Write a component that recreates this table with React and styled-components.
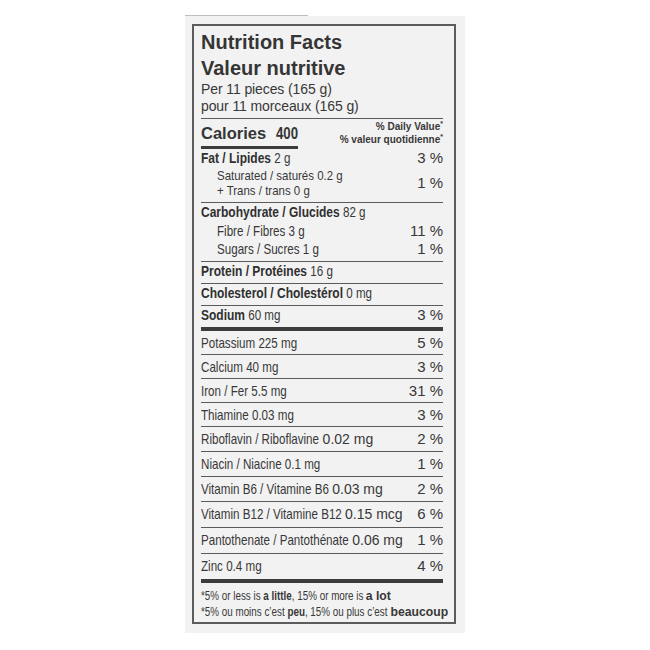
import React from "react";
import styled, { createGlobalStyle } from "styled-components";

const GlobalStyle = createGlobalStyle`
  body {
    margin: 0;
    background: #ffffff;
  }
`;

const SANS = `"Liberation Sans", Arial, sans-serif`;

// the label is printed in a condensed Helvetica; no narrow face is installed,
// so the nutrient text is squeezed horizontally instead
const SQUEEZE = 0.8;

const micronutrients = [
  { name: "Potassium", amount: "225 mg", dv: "5 %", h: 23 },
  { name: "Calcium", amount: "40 mg", dv: "3 %", h: 23 },
  { name: "Iron / Fer", amount: "5.5 mg", dv: "31 %", h: 23 },
  { name: "Thiamine", amount: "0.03 mg", dv: "3 %", h: 23 },
  { name: "Riboflavin / Riboflavine", amount: "0.02 mg", dv: "2 %", h: 24, wide: true },
  { name: "Niacin / Niacine", amount: "0.1 mg", dv: "1 %", h: 24 },
  { name: "Vitamin B6 / Vitamine B6", amount: "0.03 mg", dv: "2 %", h: 24, wide: true },
  { name: "Vitamin B12 / Vitamine B12", amount: "0.15 mcg", dv: "6 %", h: 25, wide: true },
  { name: "Pantothenate / Pantothénate", amount: "0.06 mg", dv: "1 %", h: 25, wide: true },
  { name: "Zinc", amount: "0.4 mg", dv: "4 %", h: 25 },
];

const App = () => {
  return (
    <>
      <GlobalStyle />
      <Page>
        <Sheet>
          <Flap />
          <Paper>
            <Label>
              <Title>Nutrition Facts</Title>
              <Title>Valeur nutritive</Title>
              <Serving>Per 11 pieces (165 g)</Serving>
              <Serving>pour 11 morceaux (165 g)</Serving>
              <Rule $gap={3} />

              <CaloriesRow>
                <CaloriesBlock>
                  <CaloriesText>
                    Calories<CaloriesValue>400</CaloriesValue>
                  </CaloriesText>
                  <CaloriesBar />
                </CaloriesBlock>
                <DailyValue>
                  <span>% Daily Value<Star>*</Star></span>
                  <span>% valeur quotidienne<Star>*</Star></span>
                </DailyValue>
              </CaloriesRow>

              <Section $bottom={4}>
                <Row>
                  <Name><Squeeze><b>Fat / Lipides</b> 2 g</Squeeze></Name>
                  <Percent>3 %</Percent>
                </Row>
                <SubGroup>
                  <SubLines>
                    <SubLine><Squeeze $x={0.85}>Saturated / saturés 0.2 g</Squeeze></SubLine>
                    <SubLine><Squeeze $x={0.85}>+ Trans / trans 0 g</Squeeze></SubLine>
                  </SubLines>
                  <Percent>1 %</Percent>
                </SubGroup>
              </Section>
              <Rule />

              <Section $bottom={3}>
                <Row>
                  <Name><Squeeze><b>Carbohydrate / Glucides</b> 82 g</Squeeze></Name>
                </Row>
                <SubRows>
                  <Row $indent>
                    <Name><Squeeze>Fibre / Fibres 3 g</Squeeze></Name>
                    <Percent>11 %</Percent>
                  </Row>
                  <Row $indent>
                    <Name><Squeeze>Sugars / Sucres 1 g</Squeeze></Name>
                    <Percent>1 %</Percent>
                  </Row>
                </SubRows>
              </Section>
              <Rule />

              <Section $bottom={3}>
                <Row>
                  <Name><Squeeze><b>Protein / Protéines</b> 16 g</Squeeze></Name>
                </Row>
              </Section>
              <Rule />

              <Section $bottom={3}>
                <Row>
                  <Name><Squeeze><b>Cholesterol / Cholestérol</b> 0 mg</Squeeze></Name>
                </Row>
              </Section>
              <Rule />

              <Section $bottom={3}>
                <Row>
                  <Name><Squeeze><b>Sodium</b> 60 mg</Squeeze></Name>
                  <Percent>3 %</Percent>
                </Row>
              </Section>
              <ThickRule />

              {micronutrients.map((item, i) => (
                <React.Fragment key={item.name}>
                  <MicroRow $h={item.h}>
                    <Name>
                      <Squeeze>
                        {item.name} <Amount $wide={item.wide}>{item.amount}</Amount>
                      </Squeeze>
                    </Name>
                    <Percent>{item.dv}</Percent>
                  </MicroRow>
                  {i < micronutrients.length - 1 && <Rule />}
                </React.Fragment>
              ))}
              <ThickRule />

              <Footnote>
                <Squeeze>*5% or less is <b>a little</b>, 15% or more is <Strong>a lot</Strong></Squeeze>
                <Squeeze>*5% ou moins c’est <b>peu</b>, 15% ou plus c’est <Strong>beaucoup</Strong></Squeeze>
              </Footnote>
            </Label>
          </Paper>
        </Sheet>
      </Page>
    </>
  );
};

export default App;

const Page = styled.div`
  padding-top: 15px;
`;

const Sheet = styled.div`
  width: 280px;
  margin: 0 auto;
`;

const Flap = styled.div`
  width: 123px;
  height: 1px;
  background: #bdbdbd;
`;

const Paper = styled.div`
  background: #f2f2f2;
  padding: 8px 9px 9px 7px;
`;

const Label = styled.div`
  display: flex;
  flex-direction: column;
  border: 2px solid #5c5c5c;
  padding: 3px 11px 2px 7px;
  color: #383838;
  font-family: ${SANS};
`;

const Title = styled.div`
  font-weight: 700;
  font-size: 20px;
  line-height: 26px;
  color: #353535;
`;

const Serving = styled.div`
  font-size: 14px;
  letter-spacing: -0.1px;
  line-height: 17px;
`;

const Squeeze = styled.span`
  display: inline-block;
  white-space: nowrap;
  transform: scaleX(${(p) => p.$x || SQUEEZE});
  transform-origin: left center;
`;

const Rule = styled.div`
  height: 1px;
  margin-top: ${(p) => p.$gap || 0}px;
  background: #5a5a5a;
`;

const ThickRule = styled.div`
  height: 4px;
  background: #3c3c3c;
`;

const CaloriesRow = styled.div`
  display: flex;
  justify-content: space-between;
  align-items: flex-start;
`;

const CaloriesBlock = styled.div`
  display: flex;
  flex-direction: column;
  margin-top: 5px;
`;

const CaloriesText = styled.div`
  font-weight: 700;
  font-size: 16.5px;
  line-height: 18px;
  color: #353535;
  white-space: nowrap;
`;

const CaloriesValue = styled.span`
  display: inline-block;
  margin: 0 -5.5px 0 10px;
  transform: scaleX(${SQUEEZE});
  transform-origin: left center;
`;

const CaloriesBar = styled.div`
  height: 3px;
  margin-top: 4px;
  background: #3c3c3c;
`;

const DailyValue = styled.div`
  display: flex;
  flex-direction: column;
  align-items: flex-end;
  padding-top: 1px;
  font-weight: 700;
  font-size: 10px;
  line-height: 13px;
`;

const Star = styled.sup`
  font-size: 7px;
  vertical-align: 4px;
  line-height: 0;
`;

const Section = styled.div`
  display: flex;
  flex-direction: column;
  padding-bottom: ${(p) => p.$bottom}px;
`;

const Row = styled.div`
  display: flex;
  justify-content: space-between;
  align-items: baseline;
  height: 18px;
  padding-left: ${(p) => (p.$indent ? 16 : 0)}px;
`;

const SubRows = styled.div`
  display: flex;
  flex-direction: column;
  padding-top: 1px;
`;

const SubGroup = styled.div`
  display: flex;
  justify-content: space-between;
  align-items: center;
  padding: 1px 0 0 16px;
`;

const SubLines = styled.div`
  display: flex;
  flex-direction: column;
  flex: 1 1 0;
  min-width: 0;
`;

const SubLine = styled.div`
  font-size: 13.5px;
  line-height: 15px;
`;

const Name = styled.div`
  flex: 1 1 0;
  min-width: 0;
  font-size: 14.5px;
  line-height: 18px;

  b {
    font-weight: 700;
    font-size: 15px;
    color: #303030;
  }
`;

const Amount = styled.span`
  display: inline-block;
  font-size: ${(p) => (p.$wide ? 14 : 14.5)}px;
  transform: scaleX(${(p) => (p.$wide ? 1 / SQUEEZE : 1)});
  transform-origin: left center;
`;

const Percent = styled.div`
  flex-shrink: 0;
  font-size: 15px;
  line-height: 18px;
  white-space: nowrap;
`;

const MicroRow = styled.div`
  box-sizing: border-box;
  display: flex;
  justify-content: space-between;
  align-items: baseline;
  height: ${(p) => p.$h}px;
  padding-top: 3px;
`;

const Footnote = styled.div`
  display: flex;
  flex-direction: column;
  align-items: flex-start;
  padding-top: 5px;
  font-size: 12.3px;
  line-height: 16px;

  b {
    font-weight: 700;
  }
`;

const Strong = styled.b`
  display: inline-block;
  font-size: 12.2px;
  transform: scaleX(${1 / SQUEEZE});
  transform-origin: left center;
`;
